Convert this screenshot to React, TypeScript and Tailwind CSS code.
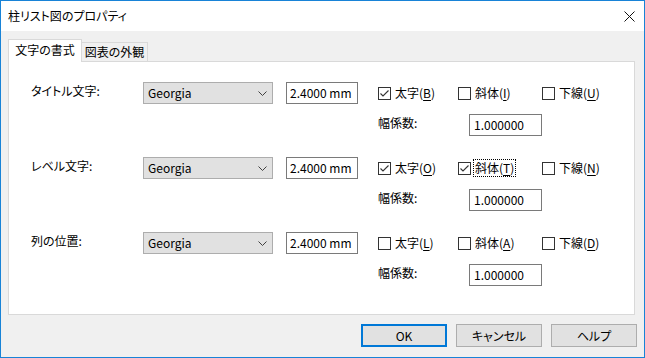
import React from "react";

const F = "font-['Noto_Sans_CJK_JP',sans-serif] [font-feature-settings:'palt'] text-[12px] leading-none text-black";

function Chevron() {
  return (
    <svg width="9" height="5" viewBox="0 0 9 5" className="shrink-0">
      <polyline points="0.5,0.5 4.5,4.5 8.5,0.5" fill="none" stroke="#404040" strokeWidth="1" />
    </svg>
  );
}

function Combo() {
  return (
    <div className="w-[130px] h-[22px] border border-[#adadad] bg-[#e1e1e1] flex items-center justify-between pl-[4px] pr-[5px] shrink-0">
      <span>Georgia</span>
      <Chevron />
    </div>
  );
}

function Edit({ value, w, pl }: { value: string; w: string; pl: string }) {
  return (
    <div className={`${w} ${pl} h-[22px] border border-[#7a7a7a] bg-white flex items-center shrink-0`}>
      <span>{value}</span>
    </div>
  );
}

function Check({
  checked,
  text,
  u,
  focus,
  w,
}: {
  checked?: boolean;
  text: string;
  u: string;
  focus?: boolean;
  w?: string;
}) {
  return (
    <div className={`flex items-center ${w ?? ""} shrink-0`}>
      <div className="w-[13px] h-[13px] border border-[#333333] bg-white flex items-center justify-center shrink-0">
        {checked && (
          <svg width="11" height="11" viewBox="0 0 11 11">
            <polyline points="1.5,5.5 4,8 9.5,2.5" fill="none" stroke="#333333" strokeWidth="1.1" />
          </svg>
        )}
      </div>
      <span
        className={`ml-[2px] px-[1px] py-[2px] border border-dotted ${
          focus ? "border-black" : "border-transparent"
        }`}
      >
        {text}(<span className="underline underline-offset-[2px]">{u}</span>)
      </span>
    </div>
  );
}

function Group({
  label,
  keys,
  checks,
  focusIdx,
}: {
  label: string;
  keys: [string, string, string];
  checks: [boolean, boolean, boolean];
  focusIdx?: number;
}) {
  return (
    <div className="flex flex-col">
      <div className="flex items-center h-[22px]">
        <div className="w-[112px] pb-[4px] shrink-0">{label}</div>
        <Combo />
        <div className="ml-[13px]">
          <Edit value="2.4000 mm" w="w-[72px]" pl="pl-[3px]" />
        </div>
        <div className="ml-[20px] flex items-center">
          <Check checked={checks[0]} text="太字" u={keys[0]} w="w-[80px]" focus={focusIdx === 0} />
          <Check checked={checks[1]} text="斜体" u={keys[1]} w="w-[84px]" focus={focusIdx === 1} />
          <Check checked={checks[2]} text="下線" u={keys[2]} focus={focusIdx === 2} />
        </div>
      </div>
      <div className="flex items-center h-[22px] mt-[10px] pl-[347px]">
        <div className="w-[91px] pb-[4px] shrink-0">幅係数:</div>
        <Edit value="1.000000" w="w-[73px]" pl="pl-[4px]" />
      </div>
    </div>
  );
}

function Btn({ text, primary }: { text: string; primary?: boolean }) {
  return (
    <div
      className={`w-[86px] h-[23px] bg-[#e1e1e1] flex items-center justify-center ${
        primary ? "border-2 border-[#0078d7]" : "border border-[#adadad]"
      }`}
    >
      {text}
    </div>
  );
}

export default function App() {
  return (
    <div className={`${F} w-[645px] h-[358px] border border-[#1883d7] bg-[#f0f0f0] flex flex-col overflow-hidden`}>
      <div className="h-[30px] bg-white flex items-center justify-between pl-[7px] pr-[9px] shrink-0">
        <span className="pb-[1px]">柱リスト図のプロパティ</span>
        <svg width="11" height="11" viewBox="0 0 11 11">
          <line x1="0.5" y1="0.5" x2="10.5" y2="10.5" stroke="#111" strokeWidth="1" />
          <line x1="10.5" y1="0.5" x2="0.5" y2="10.5" stroke="#111" strokeWidth="1" />
        </svg>
      </div>
      <div className="flex flex-col pl-[7px] pt-[8px]">
        <div className="flex items-end h-[23px] -mb-px relative z-10">
          <div className="w-[74px] h-[23px] bg-white border border-b-0 border-[#d9d9d9] flex items-center justify-center pb-[2px]">
            文字の書式
          </div>
          <div className="w-[66px] h-[19px] mb-px bg-[#f0f0f0] border border-l-0 border-b-0 border-[#d9d9d9] flex items-center justify-center">
            図表の外観
          </div>
        </div>
        <div className="w-[627px] h-[254px] bg-white border border-[#d9d9d9] pl-[22px] pt-[20px] flex flex-col gap-[21px]">
          <Group label="タイトル文字:" keys={["B", "I", "U"]} checks={[true, false, false]} />
          <Group label="レベル文字:" keys={["O", "T", "N"]} checks={[true, true, false]} focusIdx={1} />
          <Group label="列の位置:" keys={["L", "A", "D"]} checks={[false, false, false]} />
        </div>
        <div className="flex justify-end gap-[9px] mt-[9px] pr-[7px]">
          <Btn text="OK" primary />
          <Btn text="キャンセル" />
          <Btn text="ヘルプ" />
        </div>
      </div>
    </div>
  );
}
